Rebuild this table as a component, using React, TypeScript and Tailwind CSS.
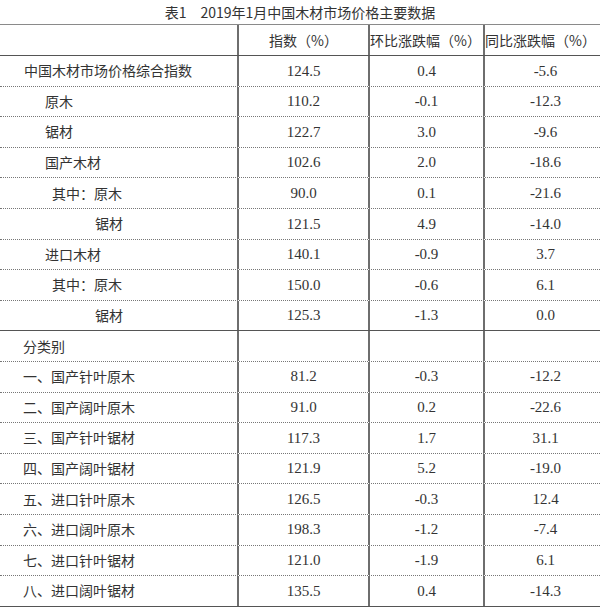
const CJK = "font-['Noto_Sans_CJK_SC',sans-serif]";
const NUM = "font-['Liberation_Serif','Noto_Sans_CJK_SC',serif] text-[15px]";

type Row = {
  name: string;
  pad: string;
  idx: string;
  mom: string;
  yoy: string;
  solid?: boolean;
};

const rows: Row[] = [
  { name: '中国木材市场价格综合指数', pad: 'pl-[24px]', idx: '124.5', mom: '0.4', yoy: '-5.6' },
  { name: '原木', pad: 'pl-[45px]', idx: '110.2', mom: '-0.1', yoy: '-12.3' },
  { name: '锯材', pad: 'pl-[45px]', idx: '122.7', mom: '3.0', yoy: '-9.6' },
  { name: '国产木材', pad: 'pl-[45px]', idx: '102.6', mom: '2.0', yoy: '-18.6' },
  { name: '其中：原木', pad: 'pl-[52px]', idx: '90.0', mom: '0.1', yoy: '-21.6' },
  { name: '锯材', pad: 'pl-[95px]', idx: '121.5', mom: '4.9', yoy: '-14.0' },
  { name: '进口木材', pad: 'pl-[45px]', idx: '140.1', mom: '-0.9', yoy: '3.7' },
  { name: '其中：原木', pad: 'pl-[52px]', idx: '150.0', mom: '-0.6', yoy: '6.1' },
  { name: '锯材', pad: 'pl-[95px]', idx: '125.3', mom: '-1.3', yoy: '0.0', solid: true },
  { name: '分类别', pad: 'pl-[23px]', idx: '', mom: '', yoy: '' },
  { name: '一、国产针叶原木', pad: 'pl-[23px]', idx: '81.2', mom: '-0.3', yoy: '-12.2' },
  { name: '二、国产阔叶原木', pad: 'pl-[23px]', idx: '91.0', mom: '0.2', yoy: '-22.6' },
  { name: '三、国产针叶锯材', pad: 'pl-[23px]', idx: '117.3', mom: '1.7', yoy: '31.1' },
  { name: '四、国产阔叶锯材', pad: 'pl-[23px]', idx: '121.9', mom: '5.2', yoy: '-19.0' },
  { name: '五、进口针叶原木', pad: 'pl-[23px]', idx: '126.5', mom: '-0.3', yoy: '12.4' },
  { name: '六、进口阔叶原木', pad: 'pl-[23px]', idx: '198.3', mom: '-1.2', yoy: '-7.4' },
  { name: '七、进口针叶锯材', pad: 'pl-[23px]', idx: '121.0', mom: '-1.9', yoy: '6.1' },
  { name: '八、进口阔叶锯材', pad: 'pl-[23px]', idx: '135.5', mom: '0.4', yoy: '-14.3', solid: true },
];

const GRID = 'grid grid-cols-[237px_131px_115px_1fr]';
const VLINE = 'border-l-2 border-[#6e6e6e]';

export default function App() {
  return (
    <div className="w-[600px] h-[611px] bg-white text-[#333] text-[14px] overflow-hidden">
      <div className={`h-[24px] flex items-center justify-center ${CJK}`}>
        <span className="mr-[2px]">表1</span>
        <span className="ml-[12px]">2019年1月中国木材市场价格主要数据</span>
      </div>
      <div className="border-t border-[#8a8a8a]">
        <div className={`${GRID} h-[31px] border-b border-[#555] ${CJK}`}>
          <div />
          <div className={`${VLINE} flex items-center justify-center`}>指数（%）</div>
          <div className={`${VLINE} flex items-center justify-center pr-[6px]`}>环比涨跌幅（%）</div>
          <div className={`${VLINE} flex items-center justify-center pr-[6px]`}>同比涨跌幅（%）</div>
        </div>
        {rows.map((r, i) => (
          <div
            key={i}
            className={`${GRID} h-[30.6px] border-b ${
              r.solid ? 'border-solid border-[#555]' : 'border-dotted border-[#777]'
            }`}
          >
            <div className={`flex items-center ${r.pad} ${CJK}`}>{r.name}</div>
            <div className={`${VLINE} flex items-center justify-center ${NUM}`}>{r.idx}</div>
            <div className={`${VLINE} flex items-center justify-center ${NUM}`}>{r.mom}</div>
            <div className={`${VLINE} flex items-center justify-center pl-[6px] ${NUM}`}>{r.yoy}</div>
          </div>
        ))}
      </div>
    </div>
  );
}
